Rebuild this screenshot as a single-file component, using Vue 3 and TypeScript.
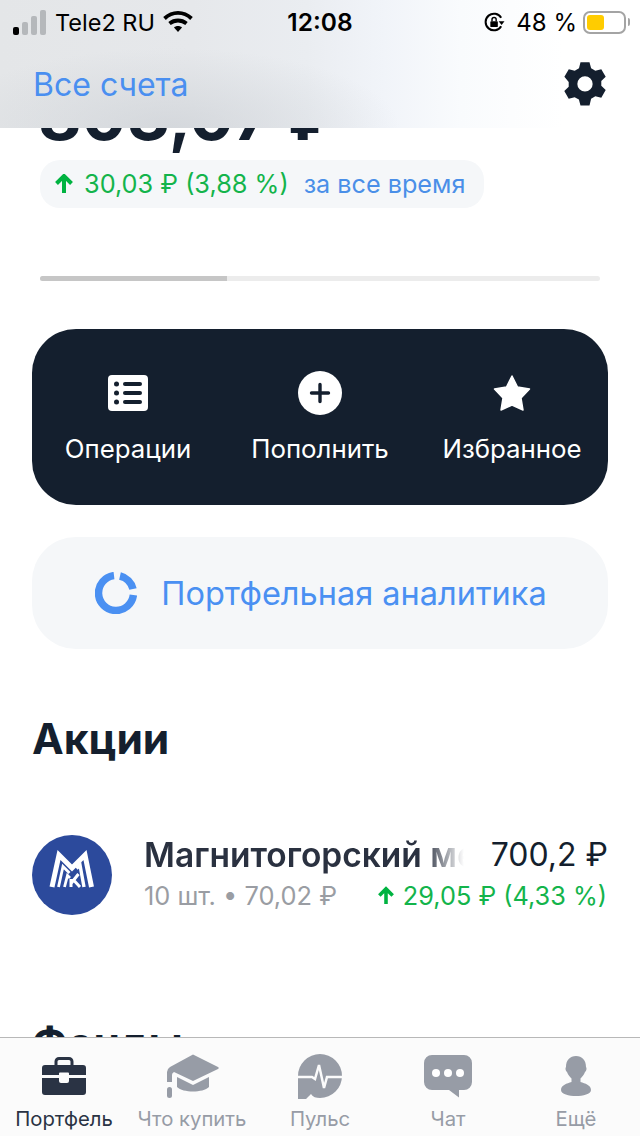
<script setup lang="ts">
const actions = [
  { id: 'ops', label: 'Операции' },
  { id: 'add', label: 'Пополнить' },
  { id: 'fav', label: 'Избранное' },
]
const tabs = [
  { id: 'case', label: 'Портфель', active: true },
  { id: 'cap', label: 'Что купить', active: false },
  { id: 'pulse', label: 'Пульс', active: false },
  { id: 'chat', label: 'Чат', active: false },
  { id: 'user', label: 'Ещё', active: false },
]
</script>

<template>
  <div class="screen">
    <main class="content">
      <div class="total">803,07 ₽</div>
      <div class="chip">
        <svg class="up" width="18" height="20" viewBox="0 0 18 20"><path d="M9 19V3M1.500 9.500 9 2l7.500 7.500" fill="none" stroke="#00b341" stroke-width="4"/></svg>
        <span class="gain">30,03 ₽ (3,88 %)</span>
        <span class="period">за все время</span>
      </div>
      <div class="track"><div class="thumb"></div></div>

      <section class="actions">
        <div v-for="a in actions" :key="a.id" class="action">
          <div class="action-icon">
            <svg v-if="a.id === 'ops'" width="40" height="36" viewBox="0 0 40 36">
              <rect width="40" height="36" rx="4" fill="#fff"/>
              <g fill="#141f2e">
                <circle cx="8.500" cy="9" r="2.500"/><circle cx="8.500" cy="18" r="2.500"/><circle cx="8.500" cy="27" r="2.500"/>
                <rect x="15" y="7" width="19" height="4" rx="2"/><rect x="15" y="16" width="19" height="4" rx="2"/><rect x="15" y="25" width="19" height="4" rx="2"/>
              </g>
            </svg>
            <svg v-else-if="a.id === 'add'" width="44" height="44" viewBox="0 0 44 44">
              <circle cx="22" cy="22" r="22" fill="#fff"/>
              <path d="M22 13.500v17M13.500 22h17" stroke="#141f2e" stroke-width="3.400" stroke-linecap="round"/>
            </svg>
            <svg v-else width="38" height="38" viewBox="0 0 38 38">
              <path d="M19 2 24.500 13 36.500 15 28 24 30 36 19 31 8 36 10 24 1.500 15 13.500 13Z" fill="#fff" stroke="#fff" stroke-width="1.500" stroke-linejoin="round"/>
            </svg>
          </div>
          <span class="action-label">{{ a.label }}</span>
        </div>
      </section>

      <section class="analytics">
        <svg width="42" height="42" viewBox="0 0 42 42">
          <path d="M19 3.600A17.500 17.500 0 1 0 38.400 23" fill="none" stroke="#4a90f2" stroke-width="7.500"/>
          <path d="M25 4A17.500 17.500 0 0 1 38 17" fill="none" stroke="#4a90f2" stroke-width="7.500"/>
        </svg>
        <span>Портфельная аналитика</span>
      </section>

      <h2 class="heading">Акции</h2>

      <section class="row">
        <svg class="logo" width="80" height="80" viewBox="0 0 80 80">
          <circle cx="40" cy="40" r="40" fill="#2c4a9c"/>
          <g fill="none" stroke="#fff">
            <path d="M20 52 27 20 40 33 53 20 59.500 52" stroke-width="5"/>
            <path d="M26.500 52 31 31.500 37.500 38" stroke-width="2.800"/>
            <path d="M32.500 52 35.500 40.500 38 43" stroke-width="2.800"/>
            <path d="M52 52 48 30 44.500 33.500" stroke-width="3.400"/>
            <path d="M39 52V44M39 48.500 46.500 39M42 45.500 48 52" stroke-width="3"/>
          </g>
        </svg>
        <div class="row-body">
          <div class="row-line">
            <div class="name">Магнитогорский металлургический комбинат</div>
            <div class="price">700,2 ₽</div>
          </div>
          <div class="row-line sub">
            <div class="qty">10 шт. • 70,02 ₽</div>
            <div class="row-gain">
              <svg width="16" height="20" viewBox="0 0 18 20"><path d="M9 19V3M1.500 9.500 9 2l7.500 7.500" fill="none" stroke="#00b341" stroke-width="4"/></svg>
              <span>29,05 ₽ (4,33 %)</span>
            </div>
          </div>
        </div>
      </section>

      <h2 class="heading funds">Фонды</h2>
    </main>

    <header class="top">
      <div class="status">
        <div class="status-left">
          <div class="bars"><i class="b1"></i><i class="b2"></i><i class="b3"></i><i class="b4"></i></div>
          <span>Tele2 RU</span>
          <svg width="30" height="24" viewBox="0 0 30 24">
            <path d="M1.500 8.500C9.500 1 20.500 1 28.500 8.500" fill="none" stroke="#000" stroke-width="3.800"/>
            <path d="M6.500 13.500C11.500 9.500 18.500 9.500 23.500 13.500" fill="none" stroke="#000" stroke-width="3.800"/>
            <path d="M11 17.500 15 22 19 17.500C17 15.500 13 15.500 11 17.500Z" fill="#000"/>
          </svg>
        </div>
        <span class="time">12:08</span>
        <div class="status-right">
          <svg width="21" height="20" viewBox="0 0 24 24">
            <path d="M20 7A10 10 0 1 0 20 17" fill="none" stroke="#000" stroke-width="2.400"/>
            <path d="M17 11h7l-3.500 4.500Z" fill="#000"/>
            <rect x="7" y="11" width="9" height="7" rx="1" fill="#000"/>
            <path d="M9 11V9a2.500 2.500 0 0 1 5 0v2" fill="none" stroke="#000" stroke-width="1.700"/>
          </svg>
          <span class="pct">48 %</span>
          <div class="battery"><div class="level"></div></div>
          <div class="nub"></div>
        </div>
      </div>
      <div class="nav">
        <span class="accounts">Все счета</span>
        <svg width="44" height="50" viewBox="0 0 44 50">
          <path fill="#141f2e" fill-rule="evenodd" d="M17 1h10l1.800 6.600 4.700 2.700 6.600-1.700 4.900 8.500-4.900 4.800v5.200l4.900 4.800-4.900 8.500-6.600-1.700-4.700 2.700L27 49H17l-1.800-6.600-4.700-2.700-6.600 1.700-4.900-8.500 4.900-4.800v-5.200L-.9 17.100l4.900-8.500 6.600 1.700 4.700-2.700ZM22 16.500a8.500 8.500 0 1 0 0 17 8.500 8.500 0 0 0 0-17Z" transform="translate(2.200 2.400) scale(.9)"/>
        </svg>
      </div>
    </header>

    <nav class="tabbar">
      <div v-for="t in tabs" :key="t.id" class="tab" :class="{ active: t.active }">
        <div class="tab-icon">
          <svg v-if="t.id === 'case'" width="44" height="38" viewBox="0 0 44 38">
            <path d="M14 9V4.500A3 3 0 0 1 17 1.500h10a3 3 0 0 1 3 3V9" fill="none" stroke="#2a3344" stroke-width="3"/>
            <path d="M3 8h38a3 3 0 0 1 3 3v7H27v-1.500a1 1 0 0 0-1-1h-8a1 1 0 0 0-1 1V18H0v-7a3 3 0 0 1 3-3Z" fill="#2a3344"/>
            <path d="M0 21h17v3a2 2 0 0 0 2 2h6a2 2 0 0 0 2-2v-3h17v14a3 3 0 0 1-3 3H3a3 3 0 0 1-3-3Z" fill="#2a3344"/>
          </svg>
          <svg v-else-if="t.id === 'cap'" width="53" height="45" viewBox="0 0 53 45">
            <path d="M27 .5 52 13Q53.500 14 52 15L27 27 8 18Q6 19 6 21V28H1V18Q1 15 4 13Z" fill="#979ca6"/>
            <rect x="1" y="33" width="5" height="11" rx="2.500" fill="#979ca6"/>
            <path d="M11 23 27 31 43 23V33C37 39 17 39 11 33Z" fill="#979ca6"/>
          </svg>
          <svg v-else-if="t.id === 'pulse'" width="44" height="45" viewBox="0 0 44 45">
            <path d="M0 22A22 22 0 1 1 22 44C18 44 15 43 13 40L8 45H0Z" fill="#979ca6"/>
            <path d="M0 23H14L17 25 21 11 26 34 29 23H44" fill="none" stroke="#fbfbfb" stroke-width="2.500"/>
          </svg>
          <svg v-else-if="t.id === 'chat'" width="48" height="43" viewBox="0 0 48 43">
            <path d="M8 0h32a8 8 0 0 1 8 8v19a8 8 0 0 1-8 8h-5v7.500L25 35H8a8 8 0 0 1-8-8V8a8 8 0 0 1 8-8Z" fill="#979ca6"/>
            <circle cx="12" cy="18" r="4" fill="#fff"/><circle cx="24" cy="18" r="4" fill="#fff"/><circle cx="36" cy="18" r="4" fill="#fff"/>
          </svg>
          <svg v-else width="30" height="40" viewBox="0 0 30 40">
            <path d="M15 0C21 0 25 4 25 11 26 12 25.500 15 24 16 23 19 21 21 19.500 22.500V26C24 27.500 30 29 30 34 30 38 22 40 15 40S0 38 0 34C0 29 6 27.500 10.500 26V22.500C9 21 7 19 6 16 4.500 15 4 12 5 11 5 4 9 0 15 0Z" fill="#979ca6"/>
          </svg>
        </div>
        <span>{{ t.label }}</span>
      </div>
    </nav>
  </div>
</template>

<style>
html, body { margin: 0; background: #fff; }
</style>

<style scoped>
.screen {
  position: relative;
  width: 640px;
  height: 1136px;
  overflow: hidden;
  background: #fff;
  font-family: Inter, "Noto Sans", sans-serif;
}
.content { padding: 80px 32px 0; }
.total {
  margin-left: 6px;
  font-size: 67px;
  line-height: 72px;
  font-weight: 700;
  color: #141f2e;
  white-space: nowrap;
}
.chip {
  display: flex;
  align-items: center;
  margin: 8px 0 0 8px;
  height: 48px;
  width: 444px;
  box-sizing: border-box;
  padding-left: 15px;
  border-radius: 20px;
  background: #f5f7f9;
  font-size: 25.300px;
}
.up { margin-right: 11px; }
.gain { color: #13b44b; margin-right: 15px; line-height: 44px; }
.period { color: #4a8fe8; font-size: 25.200px; }
.track {
  margin: 68px 8px 0;
  height: 5px;
  border-radius: 3px;
  background: #ececec;
  overflow: hidden;
}
.thumb { width: 187px; height: 5px; background: #c6c6c6; }
.actions {
  display: grid;
  grid-template-columns: 192px 192px 192px;
  height: 176px;
  margin-top: 48px;
  border-radius: 44px;
  background: #141f2e;
}
.action { display: flex; flex-direction: column; align-items: center; padding-top: 42px; }
.action-icon { height: 44px; display: flex; align-items: center; }
.action-label { margin-top: 18px; font-size: 25.8px; line-height: 32px; color: #fff; white-space: nowrap; }
.analytics {
  display: flex;
  align-items: center;
  justify-content: center;
  gap: 24px;
  height: 112px;
  margin-top: 32px;
  padding-left: 2px;
  border-radius: 44px;
  background: #f5f7f9;
  font-size: 32.5px;
  color: #4a90f2;
}
.heading {
  margin: 0;
  font-size: 42.5px;
  line-height: 48px;
  font-weight: 700;
  color: #141f2e;
}
.analytics + .heading { margin-top: 66px; }
.row { display: flex; gap: 32px; margin-top: 72px; }
.logo { flex: none; }
.row-body { flex: 1; min-width: 0; }
.row-line { display: flex; justify-content: space-between; align-items: center; white-space: nowrap; }
.name {
  width: 322px;
  overflow: hidden;
  font-size: 33.5px;
  line-height: 40px;
  font-weight: 600;
  color: #2a3140;
  -webkit-mask-image: linear-gradient(to right, #000 280px, transparent 320px);
  mask-image: linear-gradient(to right, #000 280px, transparent 320px);
}
.price { font-size: 32px; line-height: 40px; color: #141f2e; }
.sub { margin-top: 5px; }
.qty { font-size: 25.4px; line-height: 32px; color: #9a9da3; }
.row-gain { display: flex; align-items: center; gap: 9px; margin-right: 1px; font-size: 25.300px; line-height: 32px; color: #13b44b; }
.funds { margin-top: 104px; }

.top {
  position: absolute;
  top: 0;
  left: 0;
  width: 640px;
  height: 128px;
  background:
    radial-gradient(ellipse 230px 80px at 170px 128px, rgba(205, 209, 214, 0.7), rgba(205, 209, 214, 0) 100%),
    linear-gradient(90deg, #e4e6e8 0%, #e6e8eb 30%, #eaedf1 48%, #f1f4f9 60%, #f9fbfd 72%, #fff 88%);
}
.status {
  display: grid;
  grid-template-columns: 1fr auto 1fr;
  align-items: center;
  height: 44px;
  font-size: 24px;
  color: #000;
}
.status-left { display: flex; align-items: center; padding-left: 13px; gap: 8px; font-size: 23.5px; }
.bars { display: flex; align-items: flex-end; gap: 3px; height: 26px; margin-right: 1px; }
.bars i { display: block; width: 6px; border-radius: 2px; background: #b5b8bb; }
.bars .b1 { height: 8px; background: #000; }
.bars .b2 { height: 13px; }
.bars .b3 { height: 19px; }
.bars .b4 { height: 25px; }
.time { font-weight: 600; font-size: 24.5px; }
.status-right { display: flex; align-items: center; justify-content: flex-end; padding-right: 10px; }
.pct { margin: 0 6px 0 11px; }
.battery {
  width: 43px;
  height: 23px;
  box-sizing: border-box;
  padding: 2px;
  border: 2px solid #a4a4a4;
  border-radius: 7px;
}
.level { width: 17px; height: 15px; border-radius: 3px; background: #ffcc00; }
.nub { width: 2px; height: 8px; margin-left: 2px; border-radius: 0 2px 2px 0; background: #a4a4a4; }
.nav { display: flex; align-items: center; justify-content: space-between; padding: 15px 33px 0; }
.accounts { font-size: 32px; color: #4a8ff0; }

.tabbar {
  position: absolute;
  left: 0;
  bottom: 0;
  display: grid;
  grid-template-columns: repeat(5, 128px);
  box-sizing: border-box;
  width: 640px;
  height: 99px;
  border-top: 1px solid #b8b8b8;
  background: #fbfbfb;
}
.tab {
  display: flex;
  flex-direction: column;
  align-items: center;
  font-size: 20.3px;
  color: #979ca6;
}
.tab.active { color: #2a3344; }
.tab-icon { display: flex; align-items: center; justify-content: center; height: 60px; margin-top: 8px; }
.tab span { margin-top: 1px; line-height: 24px; white-space: nowrap; }
</style>
